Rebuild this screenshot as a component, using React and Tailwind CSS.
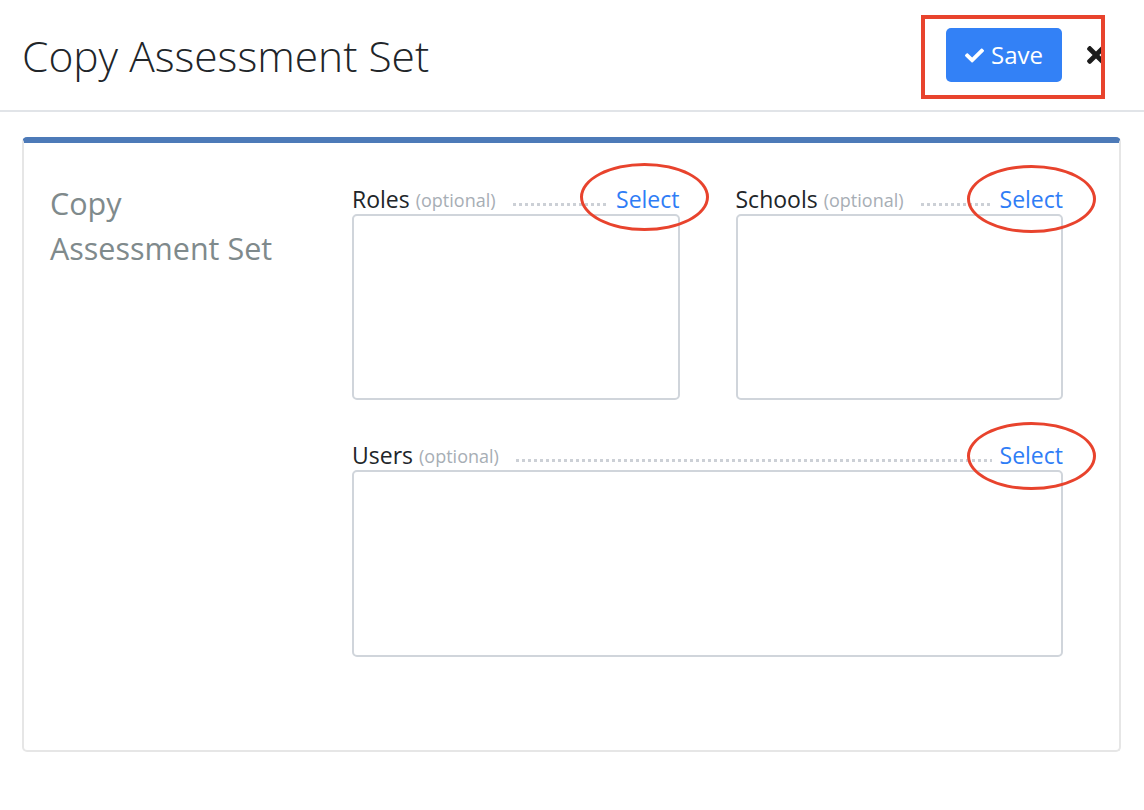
import React from "react";
import { FaCheck, FaTimes } from "react-icons/fa";

function Field({ label, boxClass }) {
  return (
    <div className="flex flex-col">
      <div className="flex items-center h-[30px]">
        <span className="text-[23px] text-[#212529] leading-[30px]">{label}</span>
        <span className="ml-[6px] text-[18px] text-[#a7aeb5] leading-[30px] mt-[2px]">(optional)</span>
        <div className="flex-1 ml-[17px] mr-[8px] mt-[10px] h-[3px] bg-[linear-gradient(to_right,#ccd0d6_50%,transparent_50%)] bg-[length:6px_3px] bg-repeat-x"></div>
        <a className="text-[23px] text-[#2f7df6] leading-[30px] cursor-pointer">Select</a>
      </div>
      <div className={"border-2 border-[#d0d5db] rounded-[5px] bg-white " + boxClass}></div>
    </div>
  );
}

export default function App() {
  return (
    <div className="relative w-[1144px] h-[810px] bg-white overflow-hidden font-['Open_Sans',sans-serif]">
      <header className="h-[112px] border-b-2 border-[#e1e4e8] flex items-center justify-between pl-[22px] pr-[37px]">
        <h1 className="text-[42.5px] font-light text-[#212529] leading-none mt-[2px]">Copy Assessment Set</h1>
        <div className="flex items-center">
          <button className="w-[116px] h-[54px] bg-[#3381f6] rounded-[5px] text-white flex items-center justify-center gap-[7px]">
            <FaCheck className="w-[19px] h-[19px]" />
            <span className="text-[24px] leading-none">Save</span>
          </button>
          <FaTimes className="ml-[23px] w-[22px] h-[26px] text-[#1c1c1c]" />
        </div>
      </header>

      <div className="pt-[25px] px-[22px] pr-[23px]">
        <div className="h-[615px] border-2 border-t-[6px] border-[#e6e6e6] border-t-[#4d7ab8] rounded-[5px] flex">
          <div className="w-[328px] pl-[26px] pt-[38px]">
            <div className="text-[30.5px] leading-[45px] text-[#7f8a8c]">
              Copy
              <br />
              Assessment Set
            </div>
          </div>
          <div className="pt-[41px] w-[711px]">
            <div className="grid grid-cols-2 gap-x-[56px]">
              <Field label="Roles" boxClass="h-[186px]" />
              <Field label="Schools" boxClass="h-[186px]" />
            </div>
            <div className="mt-[40px]">
              <Field label="Users" boxClass="h-[187px]" />
            </div>
          </div>
        </div>
      </div>

      {/* annotation overlays */}
      <div className="absolute left-[921px] top-[15px] w-[184px] h-[84px] border-[4px] border-[#e8432d]"></div>
      <div className="absolute left-[580px] top-[163px] w-[129px] h-[68px] rounded-[50%] border-[3.5px] border-[#e8432d]"></div>
      <div className="absolute left-[967px] top-[165px] w-[129px] h-[68px] rounded-[50%] border-[3.5px] border-[#e8432d]"></div>
      <div className="absolute left-[967px] top-[422px] w-[129px] h-[68px] rounded-[50%] border-[3.5px] border-[#e8432d]"></div>
    </div>
  );
}
